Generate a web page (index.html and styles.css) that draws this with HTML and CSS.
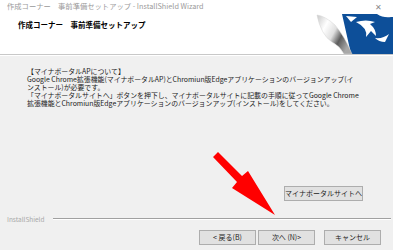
FILE: index.html
```html
<!DOCTYPE html>
<html>
<head>
    <meta charset="utf-8">
    <title>InstallShield Wizard</title>
    <link rel="stylesheet" href="styles.css">
</head>
<body>
<div class="window">
    <div class="titlebar">
        <span class="caption">作成コーナー　事前準備セットアップ - InstallShield Wizard</span>
        <span class="close">&#x2715;</span>
    </div>

    <div class="header">
        <div class="heading">作成コーナー　事前準備セットアップ</div>
        <svg class="logo" width="78" height="41" viewBox="0 0 78 41">
            <defs>
                <linearGradient id="curl" x1="0" y1="0" x2="1" y2="0.6">
                    <stop offset="0" stop-color="#c8c8c8"/>
                    <stop offset="0.3" stop-color="#ffffff"/>
                    <stop offset="0.55" stop-color="#e0e0e0"/>
                    <stop offset="0.75" stop-color="#5c5c5c"/>
                    <stop offset="1" stop-color="#a8a8a8"/>
                </linearGradient>
            </defs>
            <path d="M27 1 L62 1 Q68 5 76 4 L78 4 L78 41 L36 41 Z" fill="#0d4f99"/>
            <path d="M31 3 L42 4 L36 9 Z" fill="#fff"/>
            <path d="M41 9 Q51 6 60 9 L55 11 Q61 16 61 23 L56 18 L51 24 Q53 15 41 9 Z" fill="#fff"/>
            <path d="M60 25 Q68 26 74 21 L70 29 Q64 29 60 25 Z" fill="#fff"/>
            <path d="M2 2 Q10 3 20 12 Q30 24 37 41 L29 41 Q25 33 17 29 Q6 22 2 2 Z" fill="url(#curl)" stroke="#d4d4d4" stroke-width="0.5"/>
        </svg>
    </div>
    <div class="rule"></div>

    <div class="content">
        <div class="message">
            【マイナポータルAPについて】<br>
            Google Chrome拡張機能(マイナポータルAP)とChromiun版Edgeアプリケーションのバージョンアップ(イ<br>
            ンストール)が必要です。<br>
            「マイナポータルサイトへ」ボタンを押下し、マイナポータルサイトに記載の手順に従ってGoogle Chrome<br>
            拡張機能とChromiun版Edgeアプリケーションのバージョンアップ(インストール)をしてください。
        </div>
        <div class="site-row">
            <button class="btn site">マイナポータルサイトへ</button>
        </div>
    </div>

    <div class="footer">
        <span class="brand">InstallShield</span>
        <span class="etched"></span>
    </div>

    <div class="buttons">
        <button class="btn">&lt; 戻る(B)</button>
        <button class="btn next">次へ (N)&gt;</button>
        <button class="btn cancel">キャンセル</button>
    </div>

    <svg class="arrow" width="400" height="250" viewBox="0 0 400 250">
        <polygon points="213,157 218,152 242,176 248,171 275,215 232,188 237,182" fill="#ff0000"/>
    </svg>
</div>
</body>
</html>
```

FILE: styles.css
```css
body {
    margin: 0;
    padding: 0;
    background: #fff;
    font-family: "Noto Sans CJK JP", "Liberation Sans", sans-serif;
    color: #111;
}

.window {
    position: relative;
    width: 393px;
    height: 250px;
    background: #f0f0f0;
    display: flex;
    flex-direction: column;
}

.titlebar {
    height: 14px;
    background: #fff;
    display: flex;
    justify-content: space-between;
    align-items: center;
    padding: 0 11px 0 7px;
    font-size: 7.3px;
    color: #9a9a9a;
}

.titlebar .caption {
    margin-top: -3px;
}

.close {
    font-size: 8px;
    color: #8a8a8a;
    margin-top: -2px;
}

.header {
    height: 40px;
    background: #fff;
    display: flex;
    justify-content: space-between;
    align-items: flex-end;
}

.heading {
    align-self: flex-start;
    padding: 5px 0 0 18px;
    font-size: 7.5px;
    font-weight: bold;
    color: #000;
}

.logo {
    display: block;
}

.rule {
    height: 1px;
    background: #c8c8c8;
    border-bottom: 1px solid #fff;
}

.content {
    flex: 1;
    display: flex;
    flex-direction: column;
    padding: 11px 0 0 27px;
}

.message {
    font-size: 6.9px;
    line-height: 8px;
    white-space: nowrap;
    color: #1a1a1a;
}

.site-row {
    display: flex;
    justify-content: flex-end;
    margin-top: auto;
    padding: 0 30px 13px 0;
}

.btn {
    font-family: "Noto Sans CJK JP", "Liberation Sans", sans-serif;
    font-size: 7px;
    color: #222;
    background: #e1e1e1;
    border: 1px solid #adadad;
    height: 15px;
    width: 57px;
    padding: 0;
    margin: 0;
    line-height: 13px;
}

.btn.site {
    width: 79px;
}

.footer {
    height: 10px;
    display: flex;
    align-items: center;
    padding: 0 2px 0 7px;
    gap: 8px;
}

.brand {
    font-size: 6.5px;
    color: #a8a8a8;
}

.etched {
    flex: 1;
    height: 1px;
    background: #a0a0a0;
    border-bottom: 1px solid #fff;
}

.buttons {
    display: flex;
    justify-content: flex-end;
    padding: 6px 12px 5px 0;
}

.btn.next {
    margin-left: 2px;
}

.btn.cancel {
    margin-left: 9px;
}

.arrow {
    position: absolute;
    left: 0;
    top: 0;
    pointer-events: none;
}
```
